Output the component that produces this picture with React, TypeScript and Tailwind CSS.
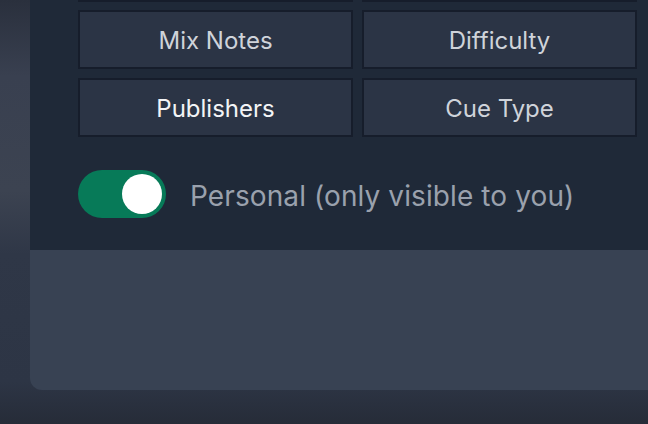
import React, { useState } from 'react';

const options = [
  { label: 'Mix Notes', active: false },
  { label: 'Difficulty', active: false },
  { label: 'Publishers', active: true },
  { label: 'Cue Type', active: false },
];

const OptionButton = ({ label, active }: { label: string; active: boolean }) => (
  <button
    className={
      'h-[59px] w-[275px] border-2 border-[#161d2b] bg-[#2b3445] pt-0.5 text-[24px] ' +
      (active ? 'text-[#f3f4f6]' : 'text-[#cfd3da]')
    }
  >
    {label}
  </button>
);

export default function App() {
  const [personal, setPersonal] = useState(true);

  return (
    <div
      className="relative h-[424px] w-[648px] overflow-hidden bg-[linear-gradient(180deg,#2a303d_0%,#394050_18%,#3c4351_45%,#2f3747_60%,#2d3545_90%,#262c38_100%)]"
      style={{ fontFamily: 'Inter, "Noto Sans", sans-serif' }}
    >
      <div className="ml-[30px] flex w-[700px] flex-col overflow-hidden rounded-bl-xl">
        <div className="bg-[#1f2938] pl-12 pb-8">
          {/* row above is scrolled out of view, only its bottom border shows */}
          <div className="grid grid-cols-[275px_275px] gap-[9px]">
            <div className="h-[2px] bg-[#161d2b]" />
            <div className="h-[2px] bg-[#161d2b]" />
          </div>
          <div className="mt-2 grid grid-cols-[275px_275px] gap-[9px]">
            {options.map((o) => (
              <OptionButton key={o.label} label={o.label} active={o.active} />
            ))}
          </div>

          <div className="mt-[33px] flex items-center gap-6">
            <button
              onClick={() => setPersonal(!personal)}
              className={
                'flex h-12 w-[88px] items-center rounded-full p-1 ' +
                (personal ? 'justify-end bg-[#077a58]' : 'justify-start bg-[#4b5563]')
              }
            >
              <span className="h-10 w-10 rounded-full bg-white" />
            </button>
            <span className="pt-1 text-[28px] tracking-[0.1px] text-[#9aa1ad]">
              Personal (only visible to you)
            </span>
          </div>
        </div>
        <div className="h-[140px] bg-[#384253]" />
      </div>
    </div>
  );
}
